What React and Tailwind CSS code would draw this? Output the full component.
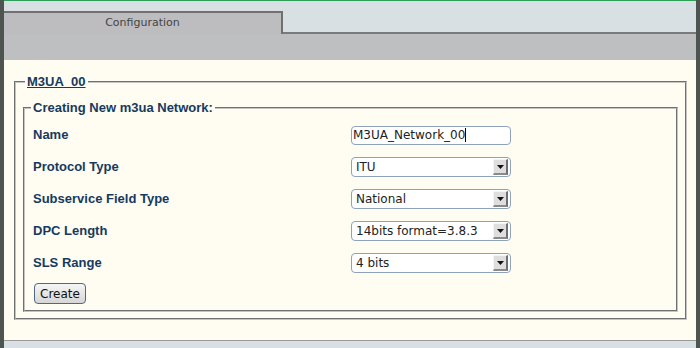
const rows = [
  { label: 'Name', value: 'M3UA_Network_00', input: true },
  { label: 'Protocol Type', value: 'ITU' },
  { label: 'Subservice Field Type', value: 'National' },
  { label: 'DPC Length', value: '14bits format=3.8.3' },
  { label: 'SLS Range', value: '4 bits' },
];

function SelectBox({ value }) {
  return (
    <div className="w-[160px] h-[20px] flex items-center bg-white border border-[#8ea3b9] rounded-[4px] pl-[4px] pr-[2px]">
      <span className="flex-1 text-[12px] text-[#222] font-['DejaVu_Sans',sans-serif] leading-none">{value}</span>
      <span className="w-[15px] h-[16px] flex items-center justify-center bg-[#dedede] border-t border-l border-[#f4f4f4] border-r-2 border-b-2 border-r-[#6f6f6f] border-b-[#8a8a8a]">
        <svg width="7" height="4" viewBox="0 0 7 4">
          <path d="M0 0h7L3.5 4z" fill="#111" />
        </svg>
      </span>
    </div>
  );
}

function TextBox({ value }) {
  return (
    <div className="w-[160px] h-[19px] flex items-center bg-white border border-[#8ea3b9] rounded-[4px] pl-[1px]">
      <span className="text-[12px] text-[#222] font-['DejaVu_Sans',sans-serif] leading-none">{value}</span>
      <span className="w-px h-[14px] bg-black" />
    </div>
  );
}

export default function App() {
  return (
    <div className="w-[700px] h-[348px] flex bg-[#4e544f] overflow-hidden">
      <div className="w-[4px]" />
      <div className="flex-1 flex flex-col">
        {/* top bar with tab */}
        <div className="h-[34px] flex items-end bg-[#d9e0e4] border-t border-[#2f9e58]">
          <div className="w-[279px] h-[23px] flex items-center justify-center bg-[#bdbdbf] border-t-2 border-r-2 border-[#707070]">
            <span className="text-[11px] text-[#444] font-['DejaVu_Sans',sans-serif] pb-[1px]">Configuration</span>
          </div>
          <div className="flex-1 self-stretch border-b-2 border-[#7a7a7a]" />
        </div>
        <div className="h-[26px] bg-[#bebfc0]" />

        {/* content */}
        <div className="flex-1 bg-[#fffcf2] pt-[14px] pl-[10px] pr-[9px] font-['Liberation_Sans',Arial,sans-serif]">
          <fieldset className="border-2 [border-style:groove] border-[#c4c4c4] pl-[7px] pr-[7px] pb-[6px]">
            <legend className="ml-[2px] px-[2px] text-[13px] leading-[16px] font-bold text-[#163a5e] underline">M3UA_00</legend>
            <fieldset className="mt-[10px] border-2 [border-style:groove] border-[#c4c4c4] pl-[6px] pb-[5px]">
              <legend className="px-[2px] text-[13px] leading-[16px] font-bold text-[#163a5e]">Creating New m3ua Network:</legend>
              <div className="pt-[3px]">
                {rows.map((r) => (
                  <div key={r.label} className="h-[32px] flex items-center pl-[2px]">
                    <span className="w-[318px] text-[13px] font-bold text-[#163a5e]">{r.label}</span>
                    {r.input ? <TextBox value={r.value} /> : <SelectBox value={r.value} />}
                  </div>
                ))}
              </div>
              <button className="mt-[4px] ml-[3px] w-[52px] h-[21px] rounded-[4px] border border-[#4f6a80] bg-gradient-to-b from-[#f6f6f6] to-[#d6d6d6] text-[12px] text-[#111] font-['DejaVu_Sans',sans-serif] leading-none">
                Create
              </button>
            </fieldset>
          </fieldset>
        </div>

        {/* bottom bar */}
        <div className="h-[8px] bg-[#d9e0e4] border-t border-[#9a9a9a]" />
      </div>
      <div className="w-[4px]" />
    </div>
  );
}
